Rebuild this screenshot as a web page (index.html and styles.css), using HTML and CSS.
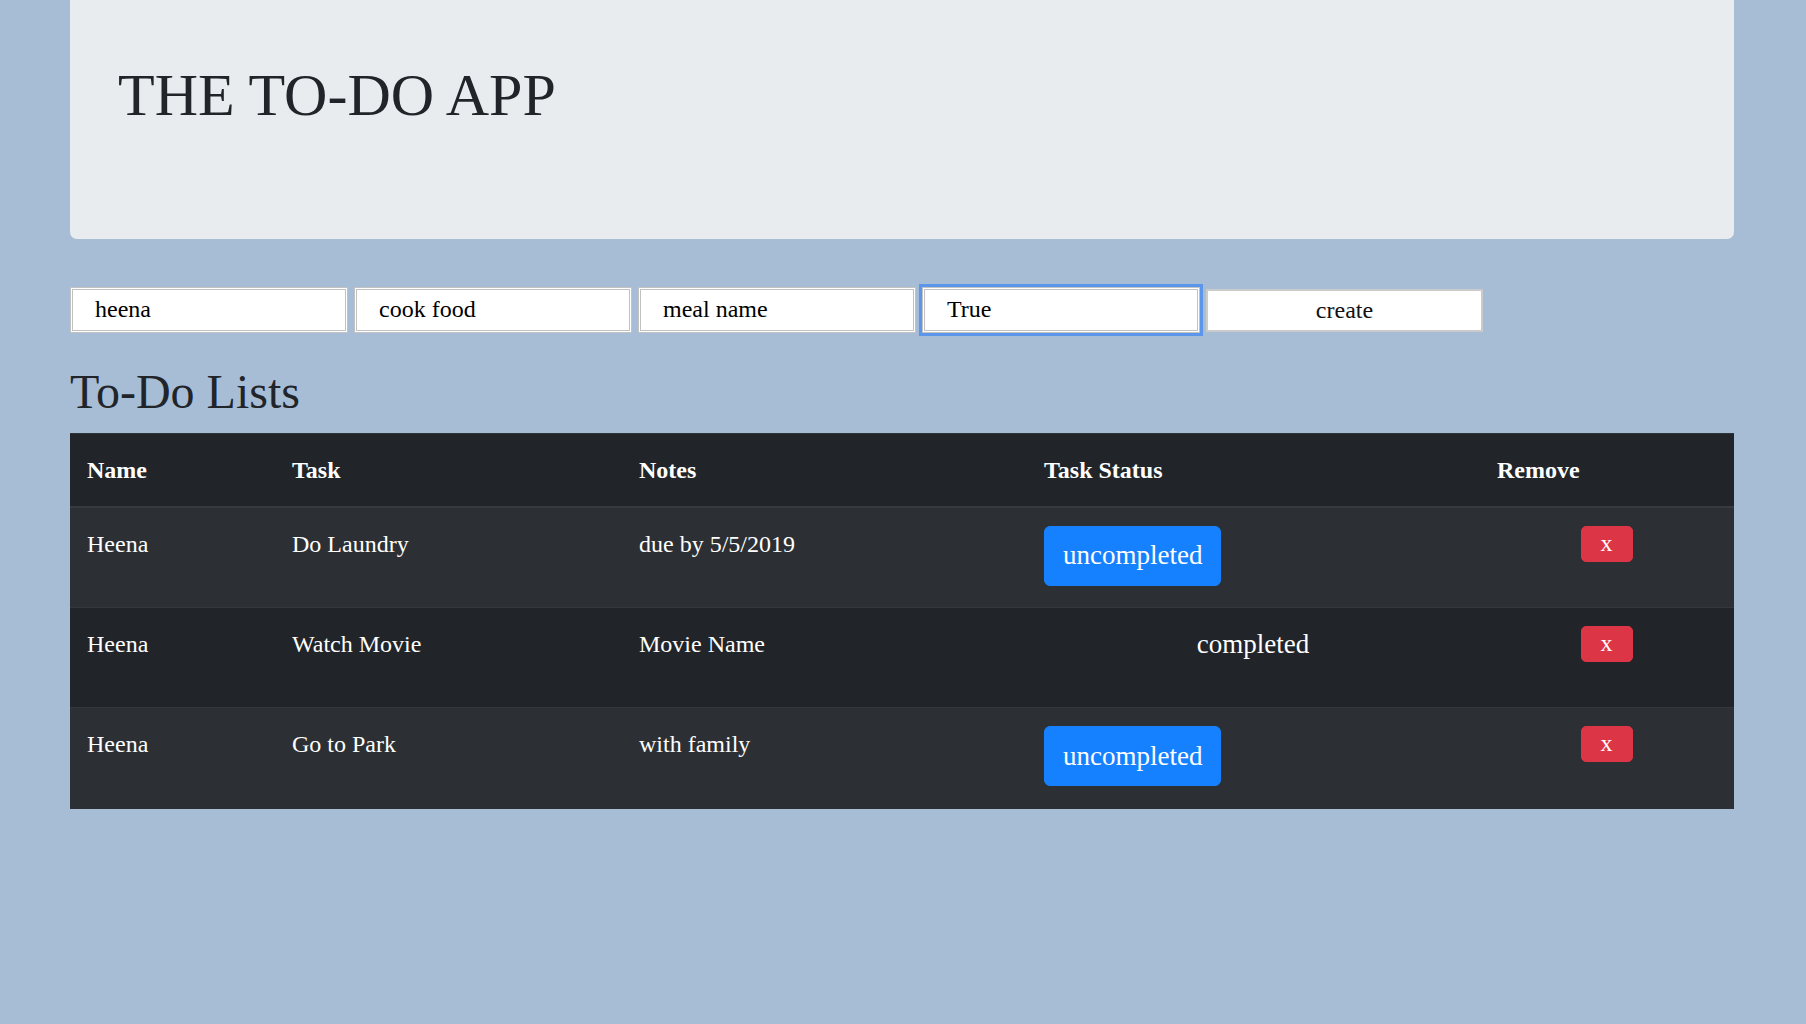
FILE: index.html
```html
<!DOCTYPE html>
<html lang="en">
<head>
<meta charset="utf-8">
<title>THE TO-DO APP</title>
<link rel="stylesheet" href="styles.css">
</head>
<body>
<div class="container">
  <header class="jumbotron">
    <h1 class="title">THE TO-DO APP</h1>
  </header>

  <form class="entry-form">
    <input class="field" type="text" value="heena">
    <input class="field" type="text" value="cook food">
    <input class="field" type="text" value="meal name">
    <input class="field focused" type="text" value="True">
    <button class="create-btn" type="button">create</button>
  </form>

  <h2 class="section-title">To-Do Lists</h2>

  <table class="todo-table">
    <colgroup>
      <col class="c-name">
      <col class="c-task">
      <col class="c-notes">
      <col class="c-status">
      <col class="c-remove">
    </colgroup>
    <thead>
      <tr>
        <th>Name</th>
        <th>Task</th>
        <th>Notes</th>
        <th>Task Status</th>
        <th>Remove</th>
      </tr>
    </thead>
    <tbody>
      <tr class="odd">
        <td>Heena</td>
        <td>Do Laundry</td>
        <td>due by 5/5/2019</td>
        <td><button class="status-btn" type="button">uncompleted</button></td>
        <td class="remove-cell"><button class="remove-btn" type="button">x</button></td>
      </tr>
      <tr class="even">
        <td>Heena</td>
        <td>Watch Movie</td>
        <td>Movie Name</td>
        <td><div class="status-done">completed</div></td>
        <td class="remove-cell"><button class="remove-btn" type="button">x</button></td>
      </tr>
      <tr class="odd">
        <td>Heena</td>
        <td>Go to Park</td>
        <td>with family</td>
        <td><button class="status-btn" type="button">uncompleted</button></td>
        <td class="remove-cell"><button class="remove-btn" type="button">x</button></td>
      </tr>
    </tbody>
  </table>
</div>
</body>
</html>
```

FILE: styles.css
```css
html, body {
  margin: 0;
  padding: 0;
}

body {
  background: #a7bdd6;
  font-family: "Liberation Serif", "Times New Roman", serif;
  font-size: 24px;
  line-height: 1.5;
  color: #212529;
}

.container {
  margin: 0 72px 0 70px;
}

.jumbotron {
  background: #e9ecef;
  border-radius: 0 0 7px 7px;
  padding: 59px 48px 96px;
  margin-bottom: 48px;
}

.title {
  font-size: 60px;
  font-weight: 400;
  line-height: 1.2;
  margin: 0 0 12px;
  color: #212529;
}

.entry-form {
  display: flex;
  align-items: center;
  gap: 6px;
  margin: 0 0 30px;
  height: 46px;
}

.field {
  box-sizing: border-box;
  width: 278px;
  height: 46px;
  margin: 0;
  padding: 0 22px 1px;
  border: 3px double #c2c2c2;
  background: #fff;
  font-family: "Liberation Serif", "Times New Roman", serif;
  font-size: 24px;
  color: #000;
  outline: none;
}

.field.focused {
  box-shadow: 0 0 0 3px #5b96ea;
}

.create-btn {
  box-sizing: border-box;
  width: 277px;
  height: 43px;
  margin: 1px 0 0;
  padding: 0 0 1px;
  border: 2px solid #cbcbcb;
  background: #fff;
  font-family: "Liberation Serif", "Times New Roman", serif;
  font-size: 24px;
  color: #111;
}

.section-title {
  font-size: 48px;
  font-weight: 400;
  line-height: 1.2;
  margin: 0 0 12px;
  color: #212529;
}

.todo-table {
  width: 100%;
  table-layout: fixed;
  border-collapse: collapse;
  background: #212529;
  color: #fff;
}

.c-name { width: 205px; }
.c-task { width: 347px; }
.c-notes { width: 405px; }
.c-status { width: 453px; }
.c-remove { width: 254px; }

.todo-table th {
  text-align: left;
  font-weight: 700;
  padding: 18px 18px 18px 17px;
  border-top: 1px solid #30353a;
  border-bottom: 2px solid #363b40;
  background: #212529;
  height: 36px;
}

.todo-table td {
  padding: 18px 18px 18px 17px;
  vertical-align: top;
  border-top: 1px solid #32383e;
}

.todo-table tbody tr {
  height: 100.7px;
}

.todo-table tr.odd td {
  background: #2c3034;
}

.todo-table tr.even td {
  background: #212529;
}

.status-btn {
  display: inline-block;
  vertical-align: top;
  box-sizing: border-box;
  height: 60px;
  margin: 0;
  padding: 0 18px;
  border: 1.5px solid #1681ff;
  border-radius: 6px;
  background: #1681ff;
  color: #fff;
  font-family: "Liberation Serif", "Times New Roman", serif;
  font-size: 27px;
  line-height: 55px;
}

.status-done {
  text-align: center;
  font-size: 27px;
  line-height: 36px;
}

.remove-cell {
  text-align: center;
}

.remove-btn {
  display: inline-block;
  vertical-align: top;
  box-sizing: border-box;
  width: 52px;
  height: 36px;
  margin: 0;
  padding: 0 0 2px;
  border: 1.5px solid #dc3545;
  border-radius: 5px;
  background: #dc3545;
  color: #fff;
  font-family: "Liberation Serif", "Times New Roman", serif;
  font-size: 24px;
  line-height: 30px;
}
```
